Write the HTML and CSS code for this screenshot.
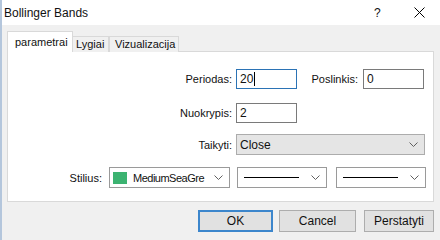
FILE: index.html
```html
<!DOCTYPE html>
<html lang="lt">
<head>
    <meta charset="UTF-8">
    <title>Bollinger Bands</title>
    <link rel="stylesheet" href="styles.css">
</head>
<body>
    <div class="window">
        <div class="titlebar">
            <span class="title">Bollinger Bands</span>
            <span class="help">?</span>
            <span class="close">
                <svg width="11" height="11" viewBox="0 0 11 11"><path d="M0.5 0.5 L10.5 10.5 M10.5 0.5 L0.5 10.5" stroke="#000" stroke-width="1" fill="none"/></svg>
            </span>
        </div>

        <div class="tabs">
            <div class="tab active">parametrai</div>
            <div class="tab">Lygiai</div>
            <div class="tab">Vizualizacija</div>
        </div>

        <div class="panel">
            <div class="row row-period">
                <label class="lbl lbl-main">Periodas:</label>
                <div class="field field-short focused">20<span class="caret"></span></div>
                <label class="lbl lbl-shift">Poslinkis:</label>
                <div class="field field-short">0</div>
            </div>

            <div class="row row-dev">
                <label class="lbl lbl-main">Nuokrypis:</label>
                <div class="field field-short">2</div>
            </div>

            <div class="row row-apply">
                <label class="lbl lbl-main">Taikyti:</label>
                <div class="combo combo-gray combo-apply">
                    <span class="combo-text">Close</span>
                    <svg class="chev" width="9" height="5" viewBox="0 0 9 5"><polyline points="0.5,0.5 4.5,4.5 8.5,0.5" stroke="#606060" fill="none"/></svg>
                </div>
            </div>

            <div class="row row-style">
                <label class="lbl lbl-style">Stilius:</label>
                <div class="combo combo-color">
                    <span class="swatch"></span>
                    <span class="combo-text color-name">MediumSeaGre</span>
                    <svg class="chev" width="9" height="5" viewBox="0 0 9 5"><polyline points="0.5,0.5 4.5,4.5 8.5,0.5" stroke="#606060" fill="none"/></svg>
                </div>
                <div class="combo combo-line">
                    <span class="line"></span>
                    <svg class="chev" width="9" height="5" viewBox="0 0 9 5"><polyline points="0.5,0.5 4.5,4.5 8.5,0.5" stroke="#606060" fill="none"/></svg>
                </div>
                <div class="combo combo-line">
                    <span class="line"></span>
                    <svg class="chev" width="9" height="5" viewBox="0 0 9 5"><polyline points="0.5,0.5 4.5,4.5 8.5,0.5" stroke="#606060" fill="none"/></svg>
                </div>
            </div>
        </div>

        <div class="buttons">
            <button class="btn btn-default">OK</button>
            <button class="btn btn-cancel">Cancel</button>
            <button class="btn btn-reset">Perstatyti</button>
        </div>
    </div>
</body>
</html>
```

FILE: styles.css
```css
body {
    margin: 0;
    padding: 0;
    font-family: "Liberation Sans", Arial, sans-serif;
    font-size: 11px;
    color: #111;
    background-color: #f0f0f0;
}

.window {
    width: 438px;
    height: 240px;
    border-left: 2px solid #b4c6dc;
    background-color: #f0f0f0;
    overflow: hidden;
}

.titlebar {
    height: 25px;
    display: flex;
    align-items: center;
    background-color: #fff;
    padding-left: 2px;
}

.title {
    font-size: 12px;
    flex: 1;
}

.help {
    font-size: 12px;
    width: 40px;
    text-align: left;
}

.close {
    width: 26px;
    display: flex;
    align-items: center;
}

.tabs {
    display: flex;
    align-items: flex-end;
    height: 21px;
    margin-top: 6px;
    margin-left: 5px;
    margin-bottom: -1px;
}

.tab {
    height: 16px;
    line-height: 15px;
    padding: 0 5px;
    border: 1px solid #d9d9d9;
    border-bottom: none;
    background-color: #f0f0f0;
    box-sizing: border-box;
}

.tab:nth-child(2) {
    width: 37px;
    padding: 0 3px;
}

.tab:nth-child(3) {
    width: 70px;
}

.tab.active {
    position: relative;
    width: 66px;
    height: 21px;
    line-height: 21px;
    padding: 0 7px;
    background-color: #fff;
    margin-right: -1px;
    z-index: 1;
}

.panel {
    margin-left: 5px;
    width: 427px;
    height: 151px;
    box-sizing: border-box;
    border: 1px solid #d9d9d9;
    background-color: #fff;
    padding-top: 17px;
}

.row {
    display: flex;
    align-items: center;
}

.row-dev {
    margin-top: 14px;
}

.row-apply {
    margin-top: 11px;
}

.row-style {
    margin-top: 12px;
}

.lbl {
    text-align: right;
    box-sizing: border-box;
}

.lbl-main {
    width: 224px;
    margin-right: 4px;
}

.lbl-shift {
    width: 61px;
    margin-right: 5px;
}

.lbl-style {
    width: 94px;
    margin-right: 7px;
}

.field {
    height: 20px;
    box-sizing: border-box;
    border: 1px solid #7a7a7a;
    background-color: #fff;
    padding-left: 3px;
    display: flex;
    align-items: center;
    font-size: 12px;
}

.field-short {
    width: 61px;
}

.focused {
    border-color: #2b73b5;
}

.caret {
    display: inline-block;
    width: 1px;
    height: 14px;
    background-color: #000;
    margin-left: 1px;
}

.combo {
    height: 21px;
    box-sizing: border-box;
    border: 1px solid #9a9a9a;
    background-color: #fff;
    display: flex;
    align-items: center;
    padding-left: 3px;
    padding-right: 6px;
    margin-right: 7px;
}

.combo-gray {
    background-color: #e5e5e5;
    border-color: #acacac;
}

.combo-apply {
    width: 189px;
}

.combo-text {
    flex: 1;
    white-space: nowrap;
    font-size: 12px;
}

.color-name {
    font-size: 11px;
    letter-spacing: -0.5px;
}

.combo-color {
    width: 121px;
}

.swatch {
    width: 14px;
    height: 12px;
    background-color: #3cb371;
    margin-right: 6px;
    flex-shrink: 0;
}

.combo-line {
    width: 90px;
    padding-left: 6px;
}

.combo-line:last-child {
    margin-left: 2px;
}

.line {
    flex: 1;
    height: 1px;
    background-color: #000;
    margin-right: 12px;
}

.chev {
    flex-shrink: 0;
}

.buttons {
    display: flex;
    justify-content: flex-end;
    gap: 6px;
    margin-top: 8px;
    padding-right: 6px;
}

.btn {
    height: 22px;
    font-family: "Liberation Sans", Arial, sans-serif;
    font-size: 12px;
    color: #111;
    background-color: #e1e1e1;
    border: 1px solid #adadad;
    padding: 0;
}

.btn-default {
    width: 75px;
    border: 2px solid #3c86cc;
}

.btn-cancel {
    width: 77px;
}

.btn-reset {
    width: 70px;
    margin-left: 2px;
}
```
